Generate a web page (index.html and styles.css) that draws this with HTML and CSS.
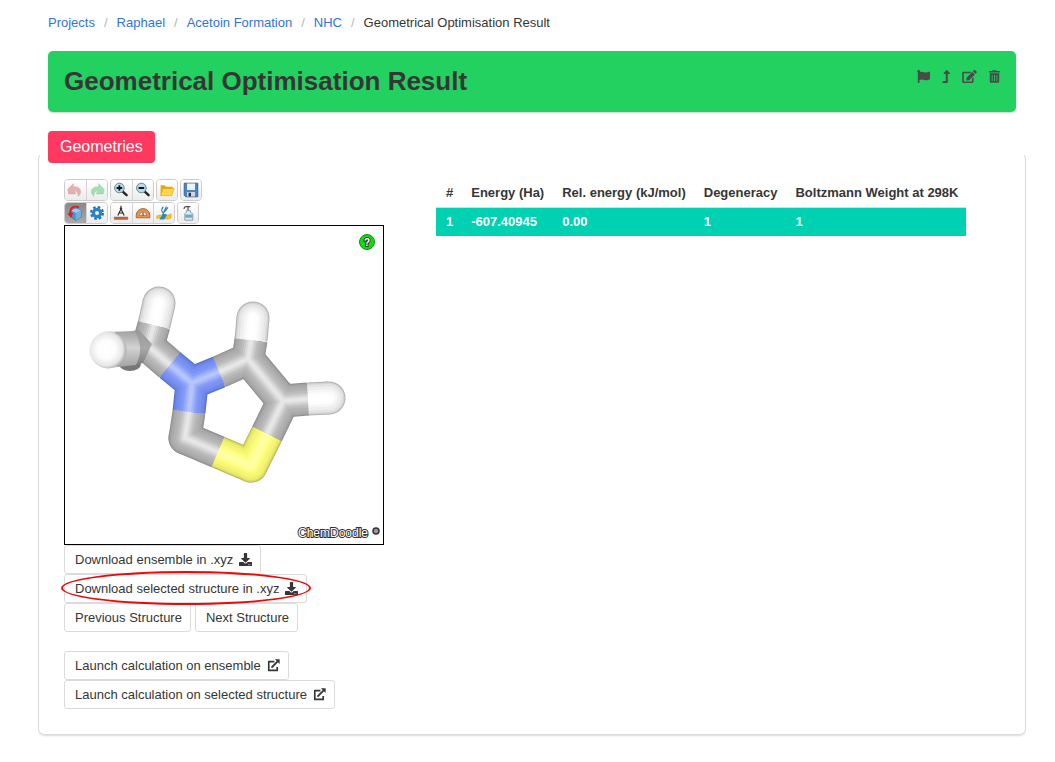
FILE: index.html
```html
<!DOCTYPE html>
<html lang="en">
<head>
<meta charset="utf-8">
<title>Geometrical Optimisation Result</title>
<link rel="stylesheet" href="styles.css">
</head>
<body>
<svg class="defs" aria-hidden="true">
  <symbol id="i-download" viewBox="0 0 512 512"><path d="M216 0h80c13.300 0 24 10.700 24 24v168h87.700c17.800 0 26.700 21.500 14.100 34.100L269.700 378.300c-7.500 7.500-19.800 7.500-27.300 0L90.100 226.100c-12.600-12.600-3.700-34.100 14.100-34.100H192V24c0-13.300 10.700-24 24-24zm296 376v112c0 13.300-10.700 24-24 24H24c-13.300 0-24-10.700-24-24V376c0-13.300 10.700-24 24-24h146.700l49 49c20.100 20.100 52.500 20.100 72.600 0l49-49H488c13.300 0 24 10.700 24 24zm-124 88c0-11-9-20-20-20s-20 9-20 20 9 20 20 20 20-9 20-20zm64 0c0-11-9-20-20-20s-20 9-20 20 9 20 20 20 20-9 20-20z"/></symbol>
  <symbol id="i-launch" viewBox="0 0 14 14"><path d="M8 2.800H1.900V12.300H11V8.500" fill="none" stroke="currentColor" stroke-width="1.800" stroke-linejoin="round"/><path d="M4.800 9.200 11.500 2.500" stroke="currentColor" stroke-width="2"/><path d="M8.500.4H13.600V5.500z"/></symbol>
</svg>

<nav class="breadcrumb" aria-label="breadcrumbs">
  <ul>
    <li><a href="#">Projects</a></li>
    <li><a href="#">Raphael</a></li>
    <li><a href="#">Acetoin Formation</a></li>
    <li><a href="#">NHC</a></li>
    <li aria-current="page">Geometrical Optimisation Result</li>
  </ul>
</nav>

<header class="banner">
  <h1>Geometrical Optimisation Result</h1>
  <div class="banner-actions">
    <button type="button" aria-label="Flag"><svg width="13" height="13" viewBox="0 0 512 512"><path d="M349.565 98.783C295.978 98.783 251.721 64 184.348 64c-24.955 0-47.309 4.384-68.045 12.013a55.947 55.947 0 0 0 3.586-23.562C118.117 24.015 94.806 1.206 66.338.048 34.345-1.254 8 24.296 8 56c0 19.026 9.497 35.825 24 45.945V488c0 13.255 10.745 24 24 24h16c13.255 0 24-10.745 24-24v-94.400c28.311-12.064 63.582-22.122 114.435-22.122 53.588 0 97.844 34.783 165.217 34.783 48.169 0 86.667-16.294 122.505-40.858C506.840 359.452 512 349.571 512 339.045v-243.100c0-23.393-24.269-38.870-45.485-29.016-34.338 15.948-76.454 31.854-116.950 31.854z"/></svg></button>
    <button type="button" aria-label="Move up"><svg width="8" height="13" viewBox="0 0 320 512"><path d="M313.553 119.669L209.587 7.666c-9.485-10.214-25.676-10.229-35.174 0L70.438 119.669C56.232 134.969 67.062 160 88.025 160H152v272H68.024a11.996 11.996 0 0 0-8.485 3.515l-56 56C-4.021 499.074 1.333 512 12.024 512H208c13.255 0 24-10.745 24-24V160h63.966c20.878 0 31.851-24.969 17.587-40.331z"/></svg></button>
    <button type="button" aria-label="Edit"><svg width="15" height="13" viewBox="0 0 576 512"><path d="M402.600 83.200l90.200 90.200c3.800 3.800 3.800 10 0 13.800L274.400 405.600l-92.800 10.300c-12.400 1.400-22.900-9.100-21.500-21.500l10.300-92.800L388.800 83.200c3.800-3.800 10-3.800 13.800 0zm162-22.900l-48.800-48.800c-15.200-15.200-39.900-15.200-55.200 0l-35.400 35.400c-3.800 3.800-3.800 10 0 13.800l90.200 90.200c3.800 3.800 10 3.800 13.800 0l35.400-35.400c15.200-15.300 15.200-40 0-55.200zM384 346.200V448H64V128h229.800c3.200 0 6.200-1.300 8.500-3.500l40-40c7.600-7.600 2.200-20.500-8.500-20.500H48C21.500 64 0 85.500 0 112v352c0 26.500 21.500 48 48 48h352c26.500 0 48-21.500 48-48V306.200c0-10.700-12.900-16-20.500-8.500l-40 40c-2.200 2.300-3.500 5.300-3.500 8.500z"/></svg></button>
    <button type="button" aria-label="Delete"><svg width="11" height="13" viewBox="0 0 448 512"><path d="M32 464a48 48 0 0 0 48 48h288a48 48 0 0 0 48-48V128H32zm272-256a16 16 0 0 1 32 0v224a16 16 0 0 1-32 0zm-96 0a16 16 0 0 1 32 0v224a16 16 0 0 1-32 0zm-96 0a16 16 0 0 1 32 0v224a16 16 0 0 1-32 0zM432 32H312l-9.400-18.700A24 24 0 0 0 281.100 0H166.800a23.720 23.720 0 0 0-21.400 13.300L136 32H16A16 16 0 0 0 0 48v32a16 16 0 0 0 16 16h416a16 16 0 0 0 16-16V48a16 16 0 0 0-16-16z"/></svg></button>
  </div>
</header>

<main>
  <h2 class="tag">Geometries</h2>
  <section class="box">
    <div class="structure">
      <div class="toolbar">
        <div class="tools">
          <div class="group">
            <button type="button" aria-label="Undo" disabled><svg viewBox="0 0 20 20"><path d="M1 9 8 2v4c6-1 10 3 9 8l-3 4c0-4-2-7-5-7l2 4H2z" fill="#d46a6a" stroke="#b55" stroke-width=".6"/></svg></button>
            <button type="button" aria-label="Redo" disabled><svg viewBox="0 0 20 20"><path d="M19 9l-7-7v4C6 5 2 9 3 14l3 4c0-4 2-7 5-7l-2 4h9z" fill="#59c472" stroke="#4a5" stroke-width=".6"/></svg></button>
          </div>
          <div class="group">
            <button type="button" aria-label="Zoom in"><svg viewBox="0 0 20 20"><path d="m11.500 11.500 5.500 5" stroke="#222" stroke-width="3" stroke-linecap="round"/><circle cx="8" cy="7.500" r="6" fill="#b5dcf2" stroke="#68808c" stroke-width="1.200"/><path d="M8 4v7M4.500 7.500h7" stroke="#111" stroke-width="2.200"/></svg></button>
            <button type="button" aria-label="Zoom out"><svg viewBox="0 0 20 20"><path d="m11.500 11.500 5.500 5" stroke="#222" stroke-width="3" stroke-linecap="round"/><circle cx="8" cy="7.500" r="6" fill="#b5dcf2" stroke="#68808c" stroke-width="1.200"/><path d="M4.500 7.500h7" stroke="#111" stroke-width="2.200"/></svg></button>
          </div>
          <div class="group">
            <button type="button" aria-label="Open"><svg viewBox="0 0 20 20"><path d="M2 17V4h5l2 2h8v3z" fill="#e7a90d"/><path d="M2 17 5 8h14l-3 9z" fill="#ffd84a" stroke="#d99b00" stroke-width=".7"/></svg></button>
          </div>
          <div class="group">
            <button type="button" aria-label="Save"><svg viewBox="0 0 20 20"><path d="M1.500 1.500h17v17h-15l-2-2z" fill="#4b83c8" stroke="#2c5590"/><path d="M5 2h10v8H5z" fill="#edf3fa"/><path d="M5 12.500h10V18H5z" fill="#cfd6df"/><path d="M7 13.500h3V18H7z" fill="#253449"/></svg></button>
          </div>
        </div>
        <div class="tools">
          <div class="group">
            <button type="button" class="active" aria-label="Rotate" aria-pressed="true"><svg viewBox="0 0 20 20"><path d="m5 7 6-3 7 3v8l-7 4-6-4z" fill="#4b93cf" stroke="#286da9"/><path d="m5 7 6 3 7-3-7-3z" fill="#9bcbef"/><path d="M11 10v9l7-4V7z" fill="#73b0df"/><path d="M15 3C7 0 3 5 4 11" fill="none" stroke="#d52020" stroke-width="2.400"/><path d="m0 10.500 8-.5-3 6z" fill="#d52020"/></svg></button>
            <button type="button" aria-label="Settings"><svg viewBox="0 0 20 20"><circle cx="10" cy="10" r="7" fill="none" stroke="#2474b5" stroke-width="3.500" stroke-dasharray="3 2.500"/><circle cx="10" cy="10" r="4.500" fill="#e8f1f8" stroke="#2b82c7" stroke-width="4"/></svg></button>
          </div>
          <div class="group">
            <button type="button" aria-label="Measure distance"><svg viewBox="0 0 20 20"><path d="M6 13 10 5l4 8M7 10h6M10 1v3" fill="none" stroke="#222" stroke-width="1.300"/><circle cx="10" cy="4.500" r="1.500" fill="#333"/><path d="M1.500 15h17v3h-17z" fill="#bf6937" stroke="#8d4824" stroke-width=".5"/></svg></button>
            <button type="button" aria-label="Measure angle"><svg viewBox="0 0 20 20"><path d="M1.500 16v-3a8.500 8.500 0 0 1 17 0v3z" fill="#e89253" stroke="#9c5225"/><path d="M5.500 13a4.500 4.500 0 0 1 9 0z" fill="#fff0df" stroke="#9c5225" stroke-width=".8"/><path d="M10 13V9" stroke="#444" stroke-width="1.300"/></svg></button>
            <button type="button" aria-label="Measure torsion"><svg viewBox="0 0 20 20"><path d="M1 14c5-4 11 2 18-3v5c-6 4-12-2-18 1z" fill="#f5c718" stroke="#c59900" stroke-width=".6"/><path d="m4 18 5-7 5 1-4 6z" fill="#2788cc"/><path d="m8 13 5-11M9 2c-4 6 0 9 2 6l4-5" fill="none" stroke="#287eb8" stroke-width="1.400"/></svg></button>
          </div>
          <div class="group">
            <button type="button" aria-label="Clean"><svg viewBox="0 0 20 20"><path d="M10 2v5M5 5c0-4 5-3 8-3" fill="none" stroke="#555" stroke-width="1.600"/><path d="M8 7h5v2l3 2v8H6v-8l2-2z" fill="#ddebf2" stroke="#607786" stroke-width=".8"/><path d="M6.500 12h9v4h-9z" fill="#6caad1"/></svg></button>
          </div>
        </div>
      </div>

      <svg class="viewer" viewBox="65 226 318 318" role="img" aria-label="3D model of the molecule">
        <defs>
          <g id="bonds">
            <path class="c" d="M148 346 170 365M219 372 248 359 283 401M248 359 251 340M283 401 308 399M283 401 267 434"/>
            <path class="c" d="M148 346 154 325"/>
            <path class="n" d="M170 365 192 383 219 372M192 383 189 412"/>
            <path class="c" d="M189 412 185 438 218 452"/>
            <path class="s" d="M218 452 251 466 267 434"/>
            <path class="h" d="M154 325 159 303M251 340 253 318M308 399 329 398"/>
            <path class="h cap" d="M159 303h.01M253 318h.01M329 398h.01"/>
            <path class="c cap" d="M185 438h.01"/>
            <path class="s cap" d="M251 466h.01"/>
          </g>
          <linearGradient id="arm" x2="0" y2="1"><stop stop-color="#a2a2a2"/><stop offset=".45" stop-color="#d2d2d2"/><stop offset="1" stop-color="#a0a0a0"/></linearGradient>
          <linearGradient id="joint" x2="0" y2="1"><stop stop-color="#999"/><stop offset=".5" stop-color="#a8a8a8"/><stop offset="1" stop-color="#777"/></linearGradient>
          <radialGradient id="ball" cx=".45" cy=".48" r=".56"><stop stop-color="#fff"/><stop offset=".45" stop-color="#fcfcfc"/><stop offset=".8" stop-color="#e6e6e6"/><stop offset="1" stop-color="#a5a5a5"/></radialGradient>
        </defs>
        <ellipse cx="130" cy="364" rx="11" ry="7" fill="#777"/>
        <use href="#bonds" class="l1"/><use href="#bonds" class="l2"/><use href="#bonds" class="l3"/><use href="#bonds" class="l4"/><use href="#bonds" class="l5"/><use href="#bonds" class="l6"/><use href="#bonds" class="l7"/><use href="#bonds" class="l8"/>
        <path d="m132 331 7-1 13 14-9 19-18 4z" fill="url(#joint)"/>
        <path d="M108 332 134 331q11 16 2 34l-28 3z" fill="url(#arm)"/>
        <path d="M108 331.500h6q12 17 2 36l-8 1z" fill="#e8e8e8"/>
        <circle cx="108" cy="350" r="18.500" fill="url(#ball)"/>
        <circle cx="367" cy="242" r="7.500" fill="#0ddd0d" stroke="#168a16"/>
        <text x="367" y="246" class="help">?</text>
        <text x="298" y="537" class="credit">ChemDoodle</text>
        <circle cx="376" cy="531" r="3" fill="#999" stroke="#333" stroke-width="1.500"/>
      </svg>

      <div class="actions">
        <button type="button" class="button">Download ensemble in .xyz <svg class="icon"><use href="#i-download"/></svg></button>
        <div class="marked">
          <button type="button" class="button">Download selected structure in .xyz <svg class="icon"><use href="#i-download"/></svg></button>
          <span class="ring"></span>
        </div>
        <div class="pair">
          <button type="button" class="button">Previous Structure</button>
          <button type="button" class="button">Next Structure</button>
        </div>
      </div>
      <div class="actions launch">
        <button type="button" class="button">Launch calculation on ensemble <svg class="icon"><use href="#i-launch"/></svg></button>
        <button type="button" class="button">Launch calculation on selected structure <svg class="icon"><use href="#i-launch"/></svg></button>
      </div>
    </div>

    <div class="results">
      <table>
        <thead><tr><th>#</th><th>Energy (Ha)</th><th>Rel. energy (kJ/mol)</th><th>Degeneracy</th><th>Boltzmann Weight at 298K</th></tr></thead>
        <tbody><tr><th>1</th><th>-607.40945</th><th>0.00</th><th>1</th><th>1</th></tr></tbody>
      </table>
    </div>
  </section>
</main>
</body>
</html>
```
FILE: styles.css
```css
* { box-sizing: border-box; }
body {
  margin: 0;
  padding: 13px 39px 27px 48px;
  background: #fff;
  color: #363636;
  font: 13px/20px "Liberation Sans", Arial, sans-serif;
}
button { font: inherit; color: inherit; cursor: pointer; }
.defs { position: absolute; width: 0; height: 0; }

.breadcrumb ul { display: flex; margin: 0; padding: 0; list-style: none; }
.breadcrumb li + li::before { content: "/"; color: #b5b5b5; padding: 0 9px; }
.breadcrumb a { color: #3273dc; text-decoration: none; }

.banner {
  display: flex;
  justify-content: space-between;
  align-items: flex-start;
  margin-top: 18px;
  padding: 16px;
  border-radius: 5px;
  background: #23d160;
  box-shadow: 0 1px 2px rgba(10, 10, 10, .2);
}
.banner h1 { margin: 0; font-size: 26px; line-height: 29px; }
.banner-actions { display: flex; gap: 12px; padding-top: 3px; }
.banner-actions button { padding: 0; border: 0; background: none; }
.banner-actions svg { display: block; fill: #4a4a4a; }

main { margin-right: -10px; }
.tag {
  position: relative;
  width: max-content;
  margin: 19px 0 -10px;
  padding: 0 12px;
  border-radius: 4px;
  background: #ff3860;
  color: #fff;
  font-size: 16px;
  font-weight: 400;
  line-height: 32px;
}
.box {
  display: flex;
  align-items: flex-start;
  gap: 52px;
  margin-left: -10px;
  padding: 25px;
  border: 1px solid #dbdbdb;
  border-top-color: transparent;
  border-radius: 6px;
  box-shadow: 0 2px 2px -1px rgba(10, 10, 10, .15);
}

.structure { width: 320px; flex: none; }
.tools { display: flex; gap: 2px; margin-bottom: 1px; }
.group { display: flex; border: 1px solid #ccc; border-radius: 4px; overflow: hidden; }
.group button {
  width: 21px;
  height: 20px;
  padding: 2px;
  border: 0;
  background: linear-gradient(#fff, #ececec);
}
.group button:only-child { width: 20px; }
.group button + button { border-left: 1px solid #d4d4d4; }
.group button:disabled svg { opacity: .5; }
.group button.active { background: linear-gradient(#888, #aaa); }
.group svg { display: block; width: 16px; height: 16px; }

.viewer { display: block; width: 100%; border: 1px solid #000; background: #fff; }
.viewer .c { stroke: var(--c); }
.viewer .n { stroke: var(--n); }
.viewer .s { stroke: var(--s); }
.viewer .h { stroke: var(--h); }
.viewer use { fill: none; stroke-linejoin: round; }
.viewer .cap { stroke-linecap: round; }
.l1 { stroke-width: 33px; --c: #8e8e8e; --n: #5870c4; --s: #b8b856; --h: #b0b0b0; }
.l2 { stroke-width: 31px; --c: #a0a0a0; --n: #6780e4; --s: #dcdc65; --h: #d4d4d4; }
.l3 { stroke-width: 28px; --c: #aaa; --n: #7089ed; --s: #eded6c; --h: #e4e4e4; }
.l4 { stroke-width: 23px; --c: #b2b2b2; --n: #7891f3; --s: #f5f573; --h: #eee; }
.l5 { stroke-width: 17px; --c: #bcbcbc; --n: #829af6; --s: #fbfb7b; --h: #f6f6f6; }
.l6 { stroke-width: 12px; --c: #cacaca; --n: #92a7fa; --s: #ffff88; --h: #fcfcfc; }
.l7 { stroke-width: 8px; --c: #d9d9d9; --n: #a4b6fc; --s: #ffff97; --h: #fefefe; }
.l8 { stroke-width: 4px; --c: #e6e6e6; --n: #b6c5ff; --s: #ffffa6; --h: #fff; }
.help, .credit {
  font-weight: 700;
  fill: #fff;
  stroke: #333;
  stroke-width: 2px;
  paint-order: stroke;
}
.help { font-size: 10px; text-anchor: middle; }
.credit { font-size: 12px; font-weight: 400; }

.actions { display: flex; flex-direction: column; align-items: flex-start; }
.launch { margin-top: 19px; }
.pair { display: flex; gap: 4px; }
.button {
  display: flex;
  align-items: center;
  gap: 6px;
  height: 29px;
  padding: 0 8px 0 10px;
  border: 1px solid #dbdbdb;
  border-radius: 3px;
  background: #fff;
  white-space: nowrap;
}
.icon { width: 13px; height: 13px; fill: currentColor; }
.marked { position: relative; }
.ring {
  position: absolute;
  inset: -3px -4px -2px -3px;
  border: 2px solid #f00808;
  border-radius: 50%;
  pointer-events: none;
}

table { border-collapse: collapse; }
th { padding: 4px 8px 4px 10px; text-align: left; white-space: nowrap; }
thead th { border-bottom: 1px solid #dbdbdb; }
tbody tr { background: #00d1b2; color: #fff; }
```
